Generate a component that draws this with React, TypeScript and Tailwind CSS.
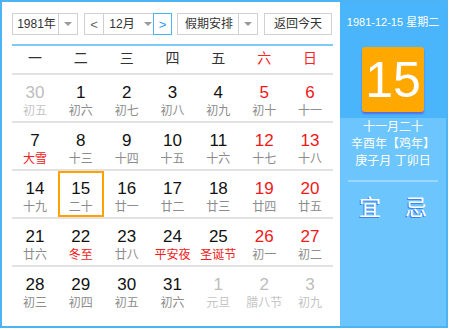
import React from 'react';

type Day = { d: number; lunar: string; muted?: boolean; weekend?: boolean; festival?: boolean; today?: boolean };

const weeks: Day[][] = [
  [
    { d: 30, lunar: '初五', muted: true },
    { d: 1, lunar: '初六' },
    { d: 2, lunar: '初七' },
    { d: 3, lunar: '初八' },
    { d: 4, lunar: '初九' },
    { d: 5, lunar: '初十', weekend: true },
    { d: 6, lunar: '十一', weekend: true },
  ],
  [
    { d: 7, lunar: '大雪', festival: true },
    { d: 8, lunar: '十三' },
    { d: 9, lunar: '十四' },
    { d: 10, lunar: '十五' },
    { d: 11, lunar: '十六' },
    { d: 12, lunar: '十七', weekend: true },
    { d: 13, lunar: '十八', weekend: true },
  ],
  [
    { d: 14, lunar: '十九' },
    { d: 15, lunar: '二十', today: true },
    { d: 16, lunar: '廿一' },
    { d: 17, lunar: '廿二' },
    { d: 18, lunar: '廿三' },
    { d: 19, lunar: '廿四', weekend: true },
    { d: 20, lunar: '廿五', weekend: true },
  ],
  [
    { d: 21, lunar: '廿六' },
    { d: 22, lunar: '冬至', festival: true },
    { d: 23, lunar: '廿八' },
    { d: 24, lunar: '平安夜', festival: true },
    { d: 25, lunar: '圣诞节', festival: true },
    { d: 26, lunar: '初一', weekend: true },
    { d: 27, lunar: '初二', weekend: true },
  ],
  [
    { d: 28, lunar: '初三' },
    { d: 29, lunar: '初四' },
    { d: 30, lunar: '初五' },
    { d: 31, lunar: '初六' },
    { d: 1, lunar: '元旦', muted: true },
    { d: 2, lunar: '腊八节', muted: true },
    { d: 3, lunar: '初九', muted: true },
  ],
];

const weekdays = ['一', '二', '三', '四', '五', '六', '日'];

// small grey dropdown triangle
const Caret = () => (
  <span className="block w-0 h-0 border-x-[4px] border-x-transparent border-t-[4px] border-t-[#999]" />
);

const App = () => {
  return (
    <div
      className="w-[448px] h-[328px] border-2 border-[#4cb3f5] flex bg-white"
      style={{ fontFamily: '"Liberation Sans", "Noto Sans CJK SC", sans-serif' }}
    >
      {/* left: controls + month grid */}
      <div className="w-[338px] pl-[10px] pr-[7px] pt-[11px] flex flex-col">
        <div className="flex h-[22px] text-[12px] text-[#333] leading-none">
          <div className="w-[66px] flex border border-[#d0d0d0]">
            <div className="flex-1 flex items-center justify-center pl-[2px]">1981年</div>
            <div className="w-[19px] border-l border-[#d0d0d0] flex items-center justify-center">
              <Caret />
            </div>
          </div>
          <div className="ml-[6px] flex">
            <div className="w-[20px] border border-[#d0d0d0] flex items-center justify-center text-[#666] text-[13px]">&lt;</div>
            <div className="w-[49px] border-y border-[#d0d0d0] flex items-center justify-center gap-[9px] pl-[4px]">
              <span>12月</span>
              <Caret />
            </div>
            <div className="w-[19px] border border-[#4fb0f2] flex items-center justify-center text-[#2e9cf0] text-[13px]">&gt;</div>
          </div>
          <div className="ml-[5px] w-[81px] flex border border-[#d0d0d0]">
            <div className="flex-1 flex items-center justify-center pl-[2px]">假期安排</div>
            <div className="w-[19px] border-l border-[#d0d0d0] flex items-center justify-center">
              <Caret />
            </div>
          </div>
          <div className="ml-[6px] w-[68px] border border-[#d0d0d0] flex items-center justify-center">返回今天</div>
        </div>

        <div className="mt-[9px] h-[2px] bg-[#7dcaf8]" />

        <div className="grid grid-cols-7 h-[29px] border-b-2 border-[#e2e2e2] text-[14px] leading-none">
          {weekdays.map((w, i) => (
            <div key={w} className={`flex items-center justify-center pb-[3px] ${i > 4 ? 'text-[#f22]' : 'text-[#333]'}`}>
              {w}
            </div>
          ))}
        </div>

        {weeks.map((week, r) => (
          <div key={r} className={`grid grid-cols-7 h-[48px] ${r < 4 ? 'border-b-2 border-[#e2e2e2]' : ''}`}>
            {week.map((day, c) => {
              const numColor = day.muted ? 'text-[#bdbdbd]' : day.weekend ? 'text-[#f01818]' : 'text-[#111]';
              const lunarColor = day.muted ? 'text-[#c4c4c4]' : day.festival ? 'text-[#f02020]' : 'text-[#8c8c8c]';
              return (
                <div
                  key={c}
                  className={`flex flex-col items-center pt-[6px] border-2 ${day.today ? 'border-[#ffa200]' : 'border-transparent'}`}
                >
                  <div className={`text-[17px] leading-[20px] ${numColor}`}>{day.d}</div>
                  <div className={`text-[12px] leading-[14px] mt-[1px] ${lunarColor}`}>{day.lunar}</div>
                </div>
              );
            })}
          </div>
        ))}
      </div>

      {/* right: selected day detail */}
      <div className="flex-1 flex flex-col bg-[#6cc5fd] text-white">
        <div className="h-[116px] bg-[#4ab5fb] flex flex-col items-center">
          <div className="mt-[12px] text-[11px] leading-[16px]">1981-12-15 星期二</div>
          <div className="mt-[17px] w-[62px] h-[65px] bg-[#ffa800] rounded-[3px] shadow-[0_2px_2px_rgba(90,90,220,0.8)] flex items-center justify-center text-[50px] leading-none font-light">
            15
          </div>
        </div>
        <div className="flex flex-col items-center text-[12px] leading-[17px] pt-[1px]">
          <div>十一月二十</div>
          <div>辛酉年【鸡年】</div>
          <div>庚子月 丁卯日</div>
        </div>
        <div className="mx-[8px] mt-[10px] h-[2px] bg-[#9ad8ff]" />
        <div className="flex justify-center gap-[24px] mt-[14px] text-[22px] leading-[24px] [text-shadow:-1px_1px_0_#3f7ff0]">
          <span>宜</span>
          <span>忌</span>
        </div>
      </div>
    </div>
  );
};

export default App;
